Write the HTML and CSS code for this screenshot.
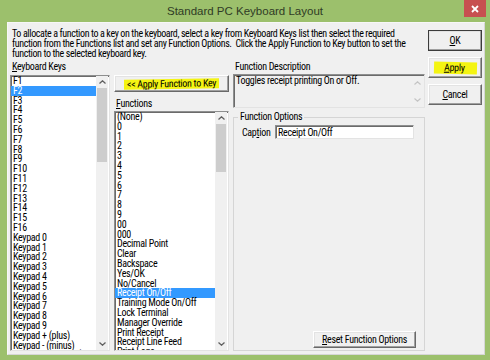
FILE: index.html
```html
<!DOCTYPE html>
<html>
<head>
    <title>Standard PC Keyboard Layout</title>
    <meta charset="UTF-8">
    <link rel="stylesheet" href="styles.css">
</head>
<body>
    <div class="window">
        <div class="titlebar">
            <span></span>
            <span class="title">Standard PC Keyboard Layout</span>
            <span class="close">
                <svg width="8" height="8" viewBox="0 0 8 8"><path d="M1 1 L7 7 M7 1 L1 7" stroke="#fff" stroke-width="1.8"/></svg>
            </span>
        </div>

        <div class="client">
            <div class="main">
                <p class="intro">To allocate a function to a key on the keyboard, select a key from Keyboard Keys list then select the required<br>function from the Functions list and set any Function Options.&nbsp; Click the Apply Function to Key button to set the<br>function to the selected keyboard key.</p>

                <div class="columns">
                    <!-- keyboard keys -->
                    <div class="col keys-col">
                        <div class="label"><u>K</u>eyboard Keys</div>
                        <div class="listbox">
                            <ul class="items">
                                <li>F1</li>
                                <li class="selected">F2</li>
                                <li>F3</li>
                                <li>F4</li>
                                <li>F5</li>
                                <li>F6</li>
                                <li>F7</li>
                                <li>F8</li>
                                <li>F9</li>
                                <li>F10</li>
                                <li>F11</li>
                                <li>F12</li>
                                <li>F13</li>
                                <li>F14</li>
                                <li>F15</li>
                                <li>F16</li>
                                <li>Keypad 0</li>
                                <li>Keypad 1</li>
                                <li>Keypad 2</li>
                                <li>Keypad 3</li>
                                <li>Keypad 4</li>
                                <li>Keypad 5</li>
                                <li>Keypad 6</li>
                                <li>Keypad 7</li>
                                <li>Keypad 8</li>
                                <li>Keypad 9</li>
                                <li>Keypad + (plus)</li>
                                <li>Keypad - (minus)</li>
                                <li>Keypad * (multiply)</li>
                            </ul>
                            <div class="vscroll">
                                <div class="arrow">
                                    <svg width="7" height="4" viewBox="0 0 7 4"><polyline points="0.5,3.5 3.5,0.8 6.5,3.5" fill="none" stroke="#606060" stroke-width="1.3"/></svg>
                                </div>
                                <div class="thumb keys-thumb"></div>
                                <div class="track"></div>
                                <div class="arrow">
                                    <svg width="7" height="4" viewBox="0 0 7 4"><polyline points="0.5,0.5 3.5,3.2 6.5,0.5" fill="none" stroke="#606060" stroke-width="1.3"/></svg>
                                </div>
                            </div>
                        </div>
                    </div>

                    <!-- functions -->
                    <div class="col func-col">
                        <button class="btn apply-fn"><span class="marker">&lt;&lt; A<u>p</u>ply Function to Key</span></button>
                        <div class="label func-label"><u>F</u>unctions</div>
                        <div class="listbox">
                            <ul class="items">
                                <li>(None)</li>
                                <li>0</li>
                                <li>1</li>
                                <li>2</li>
                                <li>3</li>
                                <li>4</li>
                                <li>5</li>
                                <li>6</li>
                                <li>7</li>
                                <li>8</li>
                                <li>9</li>
                                <li>00</li>
                                <li>000</li>
                                <li>Decimal Point</li>
                                <li>Clear</li>
                                <li>Backspace</li>
                                <li>Yes/OK</li>
                                <li>No/Cancel</li>
                                <li class="selected">Receipt On/Off</li>
                                <li>Training Mode On/Off</li>
                                <li>Lock Terminal</li>
                                <li>Manager Override</li>
                                <li>Print Receipt</li>
                                <li>Receipt Line Feed</li>
                                <li>Print Logo</li>
                            </ul>
                            <div class="vscroll">
                                <div class="arrow">
                                    <svg width="7" height="4" viewBox="0 0 7 4"><polyline points="0.5,3.5 3.5,0.8 6.5,3.5" fill="none" stroke="#606060" stroke-width="1.3"/></svg>
                                </div>
                                <div class="thumb func-thumb"></div>
                                <div class="track"></div>
                                <div class="arrow">
                                    <svg width="7" height="4" viewBox="0 0 7 4"><polyline points="0.5,0.5 3.5,3.2 6.5,0.5" fill="none" stroke="#606060" stroke-width="1.3"/></svg>
                                </div>
                            </div>
                        </div>
                    </div>

                    <!-- description + options -->
                    <div class="col opts-col">
                        <div class="label">Function Description</div>
                        <div class="descbox">
                            <div class="desc-text">Toggles receipt printing On or Off.</div>
                            <div class="desc-scroll">
                                <svg width="7" height="4" viewBox="0 0 7 4"><polyline points="0.5,3.5 3.5,0.8 6.5,3.5" fill="none" stroke="#c4c4c4" stroke-width="1.2"/></svg>
                                <svg width="7" height="4" viewBox="0 0 7 4"><polyline points="0.5,0.5 3.5,3.2 6.5,0.5" fill="none" stroke="#c4c4c4" stroke-width="1.2"/></svg>
                            </div>
                        </div>
                        <fieldset class="group">
                            <legend>Function Options</legend>
                            <div class="caption-row">
                                <span class="caption-label">Cap<u>t</u>ion</span>
                                <div class="textbox">Receipt On/Off</div>
                            </div>
                            <button class="btn reset"><u>R</u>eset Function Options</button>
                        </fieldset>
                    </div>
                </div>
            </div>

            <div class="side">
                <button class="btn side-btn default"><u>O</u>K</button>
                <button class="btn side-btn"><span class="marker wide"><u>A</u>pply</span></button>
                <button class="btn side-btn"><u>C</u>ancel</button>
            </div>
        </div>
    </div>
</body>
</html>
```

FILE: styles.css
```css
body {
    margin: 0;
    width: 490px;
    height: 360px;
    overflow: hidden;
    background: #9cc06c;
    font-family: "Roboto Condensed", Roboto, "Liberation Sans", sans-serif;
    font-stretch: condensed;
    font-size: 10px;
    letter-spacing: -0.3px;
    color: #000;
}

.window {
    display: flex;
    flex-direction: column;
    height: 360px;
}

.titlebar {
    height: 22px;
    display: grid;
    grid-template-columns: 1fr auto 1fr;
    align-items: start;
}

.title {
    font-family: "Liberation Sans", Arial, sans-serif;
    font-stretch: normal;
    font-size: 11.5px;
    letter-spacing: 0;
    color: #2f3b25;
    line-height: 22px;
}

.close {
    justify-self: end;
    margin-right: 4px;
    width: 22px;
    height: 17px;
    background: #c75050;
    display: flex;
    align-items: center;
    justify-content: center;
}

.client {
    box-sizing: border-box;
    margin: 0 5px 5px 7px;
    height: 333px;
    background: #f0f0f0;
    border: 1px solid;
    border-color: #f7f7f7 #d6d6d6 #d6d6d6 #f7f7f7;
    padding: 6px 2px 3px 2px;
    display: flex;
    gap: 3px;
}

.main {
    width: 415px;
    display: flex;
    flex-direction: column;
}

.intro {
    margin: 0 0 3px 2px;
    line-height: 10px;
    letter-spacing: -0.38px;
    white-space: nowrap;
}

.columns {
    flex: 1;
    display: flex;
    gap: 4px;
    min-height: 0;
}

.col {
    display: flex;
    flex-direction: column;
}

.keys-col { width: 100px; }
.func-col { width: 115px; }
.opts-col { width: 192px; }

.label {
    line-height: 10px;
    margin: 0 0 3px 2px;
}

.func-label {
    margin-top: 7px;
    margin-bottom: 2px;
}

.listbox {
    flex: 1;
    min-height: 0;
    display: flex;
    background: #fff;
    border: 1px solid;
    border-color: #8e8f8f #e3e3e3 #e3e3e3 #8e8f8f;
    box-shadow: inset 1px 1px 0 #6b6b6b;
    overflow: hidden;
}

.items {
    flex: 1;
    list-style: none;
    margin: 0;
    padding: 0;
    overflow: hidden;
}

.items li {
    line-height: 9.8px;
    height: 9.8px;
    padding-left: 2px;
    white-space: nowrap;
}

.items li.selected {
    background: #3399ff;
    color: #fff;
}

.vscroll {
    width: 12px;
    margin-right: 1px;
    display: flex;
    flex-direction: column;
    background: #f0f0f0;
}

.arrow {
    height: 12px;
    display: flex;
    align-items: center;
    justify-content: center;
}

.thumb {
    background: #cdcdcd;
    margin: 0 1px;
}

.keys-thumb { height: 74px; }
.func-thumb { height: 48px; }

.track { flex: 1; }

.btn {
    box-sizing: border-box;
    font-family: inherit;
    font-stretch: condensed;
    font-size: 10px;
    letter-spacing: -0.3px;
    color: #000;
    background: #f0f0f0;
    border: 1px solid;
    border-color: #fff #696969 #696969 #fff;
    box-shadow: inset -1px -1px 0 #a0a0a0, inset 1px 1px 0 #e3e3e3;
    padding: 0;
    line-height: 10px;
    white-space: nowrap;
}

.apply-fn {
    margin-top: 13px;
    height: 17px;
}

.marker {
    display: inline-block;
    background: #f4f412;
    padding: 0 3px;
    transform: skewY(-1deg);
}

.marker.wide {
    padding: 1px 12px 1px 10px;
    transform: rotate(1.5deg);
}

.descbox {
    box-sizing: border-box;
    margin-top: -1px;
    height: 34px;
    display: flex;
    border: 1px solid;
    border-color: #8e8f8f #e3e3e3 #e3e3e3 #8e8f8f;
    box-shadow: inset 1px 1px 0 #6b6b6b;
    background: #f0f0f0;
}

.desc-text {
    flex: 1;
    padding: 1px 0 0 2px;
    line-height: 10px;
}

.desc-scroll {
    width: 13px;
    display: flex;
    flex-direction: column;
    align-items: center;
    justify-content: space-between;
    padding: 6px 0 5px;
}

.group {
    flex: 1;
    margin: 4px 0 0;
    padding: 3px 8px 2px 8px;
    border: 1px solid #d5d5d5;
    display: flex;
    flex-direction: column;
    min-width: 0;
}

.group legend {
    line-height: 10px;
    padding: 0 2px;
    margin-left: -4px;
}

.caption-row {
    display: flex;
    align-items: center;
}

.caption-label {
    width: 33px;
}

.textbox {
    box-sizing: border-box;
    width: 139px;
    height: 14px;
    line-height: 10px;
    padding: 2px 0 0 2px;
    background: #fff;
    border: 1px solid;
    border-color: #8e8f8f #e3e3e3 #e3e3e3 #8e8f8f;
    box-shadow: inset 1px 1px 0 #6b6b6b;
}

.reset {
    margin-top: auto;
    align-self: flex-end;
    width: 103px;
    height: 17px;
}

.side {
    width: 54px;
    padding-top: 1px;
    display: flex;
    flex-direction: column;
    gap: 6px;
}

.side-btn {
    height: 21px;
}

.side-btn.default {
    outline: 1px solid #3c3c3c;
    outline-offset: -1px;
}
```
